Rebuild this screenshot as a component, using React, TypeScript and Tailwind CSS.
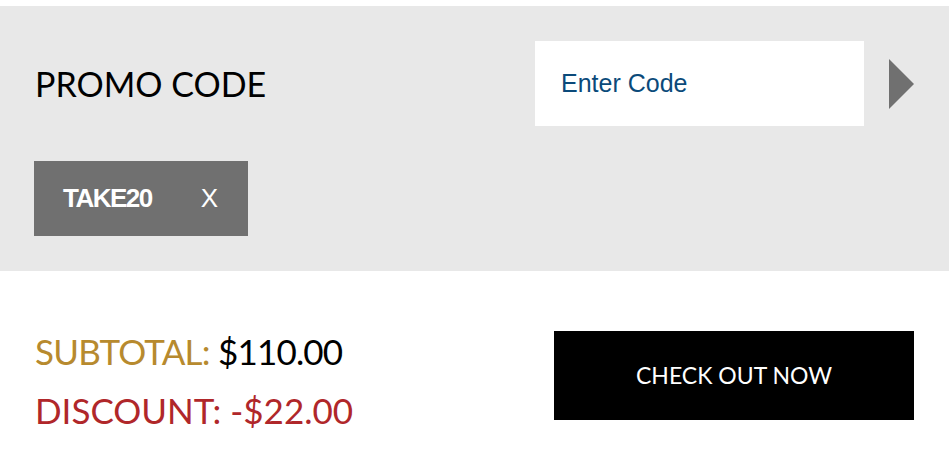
import { useState } from "react";

const futura = "font-['Lato','Noto_Sans',sans-serif]";
const arial = "font-['Liberation_Sans',Arial,sans-serif]";

function PromoPanel() {
  const [code, setCode] = useState("");

  return (
    <section className="bg-[#e8e8e8] py-[35px] pl-[34px] pr-[35px]">
      {/* Title + code input */}
      <div className="flex items-center justify-between">
        <h2 className={`${futura} pl-px text-[34px] leading-none text-black`}>
          PROMO CODE
        </h2>
        <div className="flex items-center gap-[25px]">
          <input
            value={code}
            onChange={(e) => setCode(e.target.value)}
            placeholder="Enter Code"
            className={`${arial} h-[85px] w-[329px] bg-white px-[26px] text-[25px] text-[#0b4a7a] placeholder:text-[#0b4a7a] outline-none`}
          />
          <button aria-label="Apply code" className="h-[50px] w-[25px]">
            <svg viewBox="0 0 25 50" className="h-[50px] w-[25px]">
              <polygon points="0,0 25,25 0,50" fill="#707070" />
            </svg>
          </button>
        </div>
      </div>

      {/* Applied code */}
      <div className="mt-[35px] flex h-[75px] w-[214px] items-center bg-[#707070] pl-[29px] text-white">
        <span className={`${arial} text-[26px] font-bold tracking-[-1.5px]`}>
          TAKE20
        </span>
        <span className={`${arial} ml-[49px] text-[26px]`}>X</span>
      </div>
    </section>
  );
}

function Totals() {
  return (
    <section className="flex items-start justify-between px-[35px] pt-[60px]">
      <div className={`${futura} -mt-[9px] text-[35px] leading-[59px]`}>
        <div className="tracking-[-0.8px]">
          <span className="text-[#b78a2e]">SUBTOTAL:</span>{" "}
          <span className="text-black">$110.00</span>
        </div>
        <div className="text-[#b0272a]">DISCOUNT: -$22.00</div>
      </div>
      <button
        className={`${futura} h-[89px] w-[360px] bg-black text-[23px] text-white`}
      >
        CHECK OUT NOW
      </button>
    </section>
  );
}

export default function App() {
  return (
    <div className="h-[451px] w-[949px] overflow-hidden bg-white pt-[6px]">
      <PromoPanel />
      <Totals />
    </div>
  );
}
